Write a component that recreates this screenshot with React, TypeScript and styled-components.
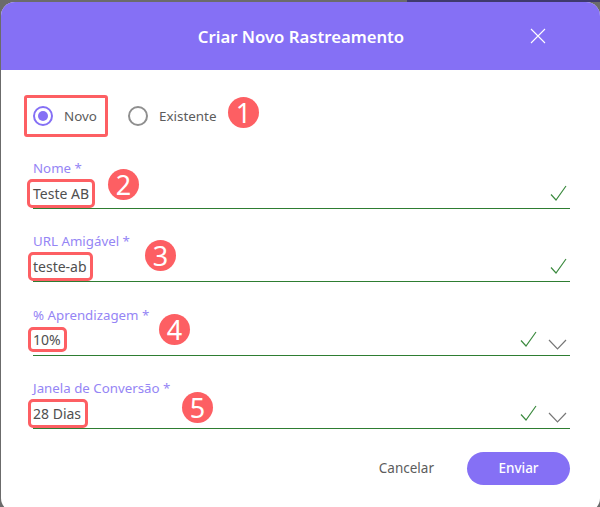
import React from "react";
import styled, { createGlobalStyle } from "styled-components";

const Global = createGlobalStyle`
  html, body { margin: 0; padding: 0; height: 507px; overflow: hidden; }
  body { font-family: "Noto Sans", "Open Sans", sans-serif; }
`;

const Backdrop = styled.div`
  width: 600px;
  height: 507px;
  box-sizing: border-box;
  padding: 2px 0 0 1px;
  overflow: hidden;
  background: linear-gradient(to right, #6b6b6b 107px, #3f3a6e 107px) 300px 0 / 300px 2px no-repeat, #6b6b6b;
`;

const Modal = styled.div`
  width: 599px;
  height: 510px;
  background: #fff;
  border-radius: 14px;
  overflow: hidden;
`;

const Header = styled.header`
  height: 68px;
  background: #8570f5;
  display: grid;
  grid-template-columns: 1fr auto 1fr;
  align-items: center;
  color: #fff;
`;

const Title = styled.h1`
  grid-column: 2;
  margin: 0 0 0 1px;
  font-size: 16.7px;
  font-weight: 600;
`;

const CloseButton = styled.button`
  grid-column: 3;
  justify-self: end;
  margin-right: 54px;
  padding: 0;
  width: 16px;
  height: 16px;
  border: 0;
  background: none;
  color: #fff;
  display: flex;
`;

const Form = styled.div`
  padding: 25px 30px 0 32px;
`;

const RadioRow = styled.div`
  position: relative;
  display: flex;
  align-items: center;
  height: 42px;
  margin: 0 0 21px -9px;
`;

const RadioOption = styled.label<{ $marked?: boolean }>`
  display: flex;
  align-items: center;
  gap: 11px;
  box-sizing: border-box;
  height: 42px;
  width: ${(p) => (p.$marked ? "84px" : "auto")};
  padding-left: 9px;
  margin-right: ${(p) => (p.$marked ? "11px" : "0")};
  border: ${(p) => (p.$marked ? "3px solid #fd5f63" : "3px solid transparent")};
  border-radius: 3px;
  font-size: 13.4px;
  color: #5c5c5c;
`;

const RadioCircle = styled.span<{ $on?: boolean }>`
  box-sizing: border-box;
  width: 20px;
  height: 20px;
  margin-left: -3px;
  flex: none;
  border-radius: 50%;
  border: 2px solid ${(p) => (p.$on ? "#8570f5" : "#8f8f8f")};
  display: flex;
  align-items: center;
  justify-content: center;
  &::after {
    content: "";
    width: 10px;
    height: 10px;
    border-radius: 50%;
    background: ${(p) => (p.$on ? "#8570f5" : "transparent")};
  }
`;

const Field = styled.div`
  margin-bottom: 22.4px;
`;

const Label = styled.div`
  height: 20px;
  line-height: 20px;
  font-size: 13.3px;
  color: #9585f5;
`;

const InputRow = styled.div`
  position: relative;
  box-sizing: border-box;
  height: 31px;
  display: flex;
  align-items: center;
  border-bottom: 1px solid #2e7d32;
`;

const Value = styled.span<{ $padY: number; $padL: number; $padR: number }>`
  font-size: 14px;
  line-height: 19px;
  color: #4f4f4f;
  padding: ${(p) => `${p.$padY}px ${p.$padR}px ${p.$padY}px ${p.$padL}px`};
  margin-left: ${(p) => -p.$padL}px;
  outline: 3px solid #fd5f63;
  border-radius: 2px;
`;

const RowIcons = styled.div`
  margin-left: auto;
  display: flex;
  align-items: center;
  gap: 11px;
  padding-right: 3px;
`;

const Check = styled.svg`
  width: 17px;
  height: 16px;
  margin-top: -1px;
`;

const Chevron = styled.svg`
  width: 19px;
  height: 11px;
  margin-top: 9px;
`;

const Badge = styled.span<{ $left: number; $top: number }>`
  position: absolute;
  left: ${(p) => p.$left}px;
  top: ${(p) => p.$top}px;
  width: 31px;
  height: 31px;
  border-radius: 50%;
  background: #fd5f63;
  color: #fff;
  font-size: 27px;
  line-height: 31px;
  text-align: center;
`;

const Actions = styled.div`
  display: flex;
  justify-content: flex-end;
  align-items: center;
  gap: 33px;
`;

const CancelButton = styled.button`
  border: 0;
  padding: 0;
  background: none;
  font: inherit;
  font-size: 13.5px;
  color: #5c5c5c;
`;

const SendButton = styled.button`
  width: 103px;
  height: 33px;
  border: 0;
  border-radius: 17px;
  background: #8570f5;
  color: #fff;
  font: inherit;
  font-size: 13.5px;
  font-weight: 500;
`;

const CheckIcon = () => (
  <Check viewBox="0 0 17 16" fill="none" stroke="#3d8b40" strokeWidth="1.2">
    <path d="M1 9.5 L6 15 L16 1" />
  </Check>
);

const ChevronIcon = () => (
  <Chevron viewBox="0 0 19 11" fill="none" stroke="#777" strokeWidth="1.2">
    <path d="M1 1 L9.5 10 L18 1" />
  </Chevron>
);

const fields = [
  { label: "Nome *", value: "Teste AB", badge: "2", left: 75, top: -9, select: false, padY: 2, padL: 3, padR: 3 },
  { label: "URL Amigável *", value: "teste-ab", badge: "3", left: 112, top: -11, select: false, padY: 2, padL: 2, padR: 3 },
  { label: "% Aprendizagem *", value: "10%", badge: "4", left: 126, top: -11, select: true, padY: 0, padL: 2, padR: 3 },
  { label: "Janela de Conversão *", value: "28 Dias", badge: "5", left: 149, top: -6, select: true, padY: 2, padL: 2, padR: 4 },
];

export default function App() {
  return (
    <Backdrop>
      <Global />
      <Modal>
        <Header>
          <Title>Criar Novo Rastreamento</Title>
          <CloseButton aria-label="Fechar">
            <svg width="16" height="16" viewBox="0 0 16 16" fill="none" stroke="#fff" strokeWidth="1.1">
              <path d="M1 1 L15 15 M15 1 L1 15" />
            </svg>
          </CloseButton>
        </Header>
        <Form>
          <RadioRow>
            <RadioOption $marked>
              <RadioCircle $on />
              Novo
            </RadioOption>
            <RadioOption>
              <RadioCircle />
              Existente
            </RadioOption>
            <Badge $left={204} $top={2}>1</Badge>
          </RadioRow>
          {fields.map((f) => (
            <Field key={f.label}>
              <Label>{f.label}</Label>
              <InputRow>
                <Value $padY={f.padY} $padL={f.padL} $padR={f.padR}>{f.value}</Value>
                <Badge $left={f.left} $top={f.top}>{f.badge}</Badge>
                <RowIcons>
                  <CheckIcon />
                  {f.select && <ChevronIcon />}
                </RowIcons>
              </InputRow>
            </Field>
          ))}
          <Actions>
            <CancelButton>Cancelar</CancelButton>
            <SendButton>Enviar</SendButton>
          </Actions>
        </Form>
      </Modal>
    </Backdrop>
  );
}
